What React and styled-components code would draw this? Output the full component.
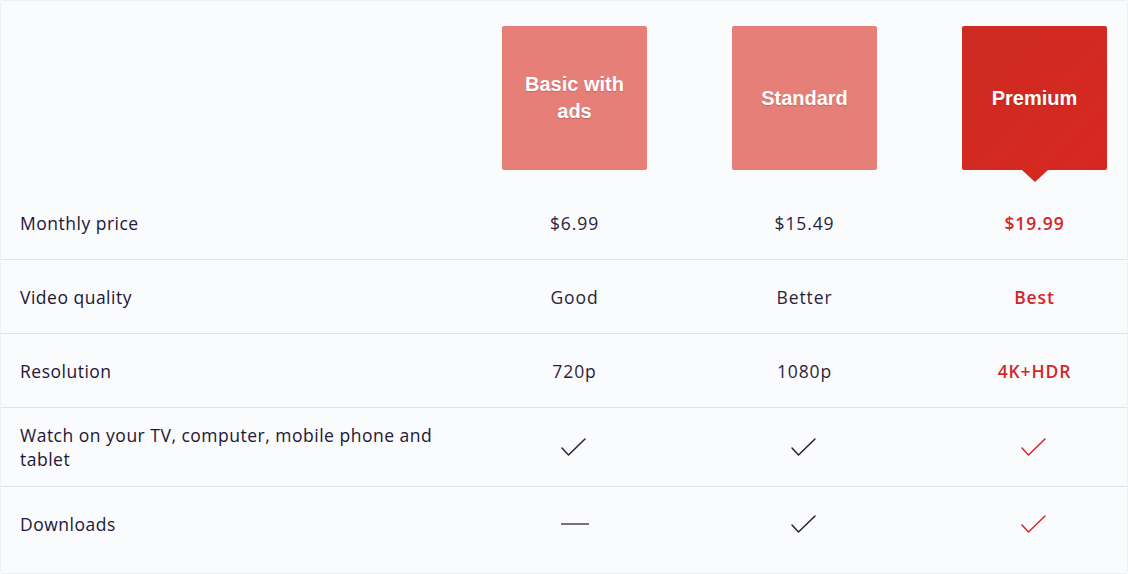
import React from 'react';
import styled, { createGlobalStyle } from 'styled-components';

const GlobalStyle = createGlobalStyle`
  html, body {
    margin: 0;
    padding: 0;
    background: #fafbfd;
  }
  body {
    font-family: "Open Sans", "Liberation Sans", sans-serif;
  }
`;

const Card = styled.div`
  width: 1128px;
  height: 574px;
  box-sizing: border-box;
  border: 1px solid #eceff3;
  border-radius: 3px;
  background: #fafbfd;
  overflow: hidden;
`;

const Grid = styled.div`
  display: grid;
  grid-template-columns: 416px 145px 145px 145px;
  column-gap: 85px;
  align-items: center;
`;

const Header = styled(Grid)`
  padding: 25px 0 16px;
  align-items: stretch;
`;

const PlanBox = styled.div`
  position: relative;
  height: 144px;
  display: flex;
  align-items: center;
  justify-content: center;
  text-align: center;
  padding: 0 16px;
  box-sizing: border-box;
  border-radius: 2px;
  background: ${p => p.selected
    ? 'linear-gradient(135deg, #cd2b21 0%, #d72820 100%)'
    : '#e57f78'};
  color: #fff;
  font-family: "Liberation Sans", Arial, sans-serif;
  font-weight: 700;
  font-size: 20px;
  line-height: 27px;
  text-shadow: 0 1px 1px rgba(120, 20, 20, 0.25);

  ${p => p.selected && `
    &::after {
      content: '';
      position: absolute;
      left: 50%;
      bottom: -12px;
      transform: translateX(-50%);
      border-left: 13px solid transparent;
      border-right: 13px solid transparent;
      border-top: 12px solid #d32820;
    }
  `}
`;

const Row = styled(Grid)`
  min-height: 74px;
  padding: 15px 0;
  box-sizing: border-box;
  border-bottom: ${p => p.last ? 'none' : '1px solid #dfe4ea'};
`;

const Label = styled.div`
  width: 440px;
  padding-left: 19px;
  box-sizing: border-box;
  color: #221536;
  font-size: 17.5px;
  line-height: 24px;
  letter-spacing: 0.5px;
`;

const Value = styled.div`
  text-align: center;
  color: ${p => p.accent ? '#d3262a' : '#2a1e3c'};
  font-weight: ${p => p.accent ? 600 : 400};
  font-size: 17.5px;
  line-height: 24px;
  letter-spacing: 0.9px;
  display: flex;
  justify-content: center;
  align-items: center;
`;

const Check = ({ color }) => (
  <svg width="30" height="20" viewBox="0 0 30 20" fill="none">
    <path d="M2 11 L8.5 18 L25 2" stroke={color} strokeWidth="1.5" strokeLinecap="round" strokeLinejoin="round" />
  </svg>
);

const Dash = () => (
  <svg width="30" height="20" viewBox="0 0 30 20" fill="none">
    <path d="M1 10 H29" stroke="#4a4458" strokeWidth="1.5" />
  </svg>
);

const plans = [
  { name: 'Basic with ads' },
  { name: 'Standard' },
  { name: 'Premium', selected: true },
];

const dark = '#2a1e3c';
const red = '#d3262a';

const rows = [
  { label: 'Monthly price', values: ['$6.99', '$15.49', '$19.99'] },
  { label: 'Video quality', values: ['Good', 'Better', 'Best'] },
  { label: 'Resolution', values: ['720p', '1080p', '4K+HDR'] },
  {
    label: 'Watch on your TV, computer, mobile phone and tablet',
    values: [<Check color={dark} />, <Check color={dark} />, <Check color={red} />],
  },
  {
    label: 'Downloads',
    values: [<Dash />, <Check color={dark} />, <Check color={red} />],
  },
];

export default function App() {
  return (
    <>
      <GlobalStyle />
      <Card>
        <Header>
          <div />
          {plans.map(plan => (
            <PlanBox key={plan.name} selected={plan.selected}>{plan.name}</PlanBox>
          ))}
        </Header>
        {rows.map((row, i) => (
          <Row key={row.label} last={i === rows.length - 1}>
            <Label>{row.label}</Label>
            {row.values.map((v, j) => (
              <Value key={j} accent={j === 2}>{v}</Value>
            ))}
          </Row>
        ))}
      </Card>
    </>
  );
}
